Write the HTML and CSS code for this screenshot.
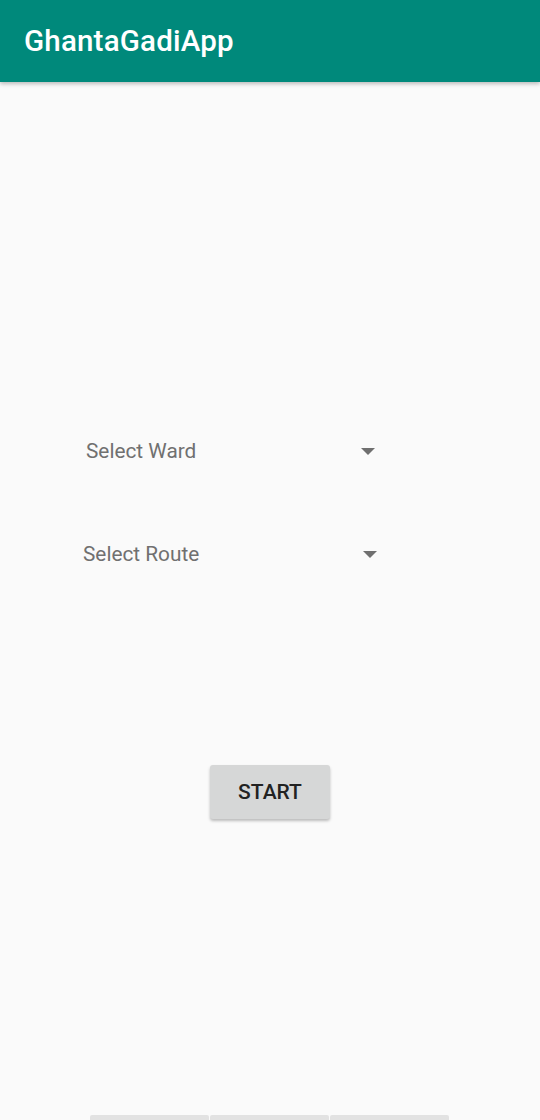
FILE: index.html
```html
<!DOCTYPE html>
<html>
<head>
<meta charset="utf-8">
<link rel="stylesheet" href="styles.css">
</head>
<body>
<header class="appbar"><h1 class="title">GhantaGadiApp</h1></header>
<main class="content">
  <div class="spinner spinner-ward">
    <span class="spinner-text">Select Ward</span>
    <span class="arrow"></span>
  </div>
  <div class="spinner spinner-route">
    <span class="spinner-text">Select Route</span>
    <span class="arrow"></span>
  </div>
  <div class="btn-wrap"><button class="btn">START</button></div>
  <div class="bottom-bar">
    <div class="bottom-btn"></div>
    <div class="bottom-btn"></div>
    <div class="bottom-btn"></div>
  </div>
</main>
</body>
</html>
```
FILE: styles.css
```css
html, body {
  margin: 0;
  padding: 0;
}
body {
  width: 540px;
  height: 1120px;
  overflow: hidden;
  background: #fafafa;
  font-family: Roboto, "Liberation Sans", sans-serif;
}
.appbar {
  height: 82px;
  background: #00897b;
  display: flex;
  align-items: center;
  padding-left: 24px;
  box-shadow: 0 2px 4px rgba(0,0,0,0.25);
  position: relative;
  z-index: 1;
}
.title {
  margin: 0;
  color: #fff;
  font-size: 29.5px;
  font-weight: 500;
  letter-spacing: 0.2px;
}
.content {
  display: flex;
  flex-direction: column;
}
.spinner {
  height: 48px;
  display: flex;
  align-items: center;
  justify-content: space-between;
}
.spinner-ward {
  margin-top: 345px;
  margin-left: 86px;
  width: 289px;
}
.spinner-route {
  margin-top: 55px;
  margin-left: 83px;
  width: 294px;
}
.spinner-text {
  color: #707070;
  font-size: 20.8px;
}
.arrow {
  width: 0;
  height: 0;
  border-left: 7px solid transparent;
  border-right: 7px solid transparent;
  border-top: 7px solid #6f6f6f;
}
.btn-wrap {
  margin-top: 187px;
  display: flex;
  justify-content: center;
}
.btn {
  width: 120px;
  height: 54px;
  background: #d6d7d7;
  border: none;
  border-radius: 3px;
  box-shadow: 0 2px 3px rgba(0,0,0,0.25);
  font-family: Roboto, "Liberation Sans", sans-serif;
  font-size: 21px;
  font-weight: 500;
  color: #222;
  padding: 0;
}
.bottom-bar {
  margin-top: 296px;
  margin-left: 90px;
  display: flex;
  gap: 1px;
}
.bottom-btn {
  width: 119px;
  height: 48px;
  background: #e2e2e2;
  border-radius: 2px;
}
```
